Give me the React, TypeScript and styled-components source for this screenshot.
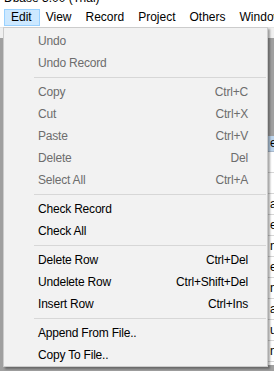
import React from "react";
import styled, { createGlobalStyle } from "styled-components";

const GlobalStyle = createGlobalStyle`
  html, body {
    margin: 0;
    padding: 0;
    overflow: hidden;
    background: #ffffff;
  }
`;

type MenuEntry =
  | { kind: "item"; label: string; shortcut?: string; disabled?: boolean }
  | { kind: "sep" };

const editMenu: MenuEntry[] = [
  { kind: "item", label: "Undo", disabled: true },
  { kind: "item", label: "Undo Record", disabled: true },
  { kind: "sep" },
  { kind: "item", label: "Copy", shortcut: "Ctrl+C", disabled: true },
  { kind: "item", label: "Cut", shortcut: "Ctrl+X", disabled: true },
  { kind: "item", label: "Paste", shortcut: "Ctrl+V", disabled: true },
  { kind: "item", label: "Delete", shortcut: "Del", disabled: true },
  { kind: "item", label: "Select All", shortcut: "Ctrl+A", disabled: true },
  { kind: "sep" },
  { kind: "item", label: "Check Record" },
  { kind: "item", label: "Check All" },
  { kind: "sep" },
  { kind: "item", label: "Delete  Row", shortcut: "Ctrl+Del" },
  { kind: "item", label: "Undelete Row", shortcut: "Ctrl+Shift+Del" },
  { kind: "item", label: "Insert Row", shortcut: "Ctrl+Ins" },
  { kind: "sep" },
  { kind: "item", label: "Append From File.." },
  { kind: "item", label: "Copy To File.." },
];

const topMenus = ["Edit", "View", "Record", "Project", "Others", "Window"];

const gridRows = ["", "", "adams", "evans", "nolan", "ellis", "nash", "allen", "upton", "noble"];

export default function App() {
  return (
    <>
      <GlobalStyle />
      <Screen>
        <TitleStrip>
          <TitleText>Dbase 3.00 (Trial)</TitleText>
        </TitleStrip>
        <MenuBar>
          {topMenus.map((m, i) => (
            <TopItem key={m} $open={i === 0}>
              {m}
            </TopItem>
          ))}
        </MenuBar>
        <Workspace>
          <ToolStrip />
          <MdiArea>
            <GridWindow>
              <GridHeader>
                <Cell $first>No</Cell>
                <Cell>ename</Cell>
              </GridHeader>
              {gridRows.map((r, i) => (
                <GridRow key={i}>
                  <Cell $first />
                  <Cell>{r}</Cell>
                </GridRow>
              ))}
            </GridWindow>
          </MdiArea>
        </Workspace>

        <Dropdown>
          {editMenu.map((e, i) =>
            e.kind === "sep" ? (
              <Separator key={i} />
            ) : (
              <MenuRow key={i} $disabled={e.disabled}>
                <Label>{e.label}</Label>
                {e.shortcut && <Shortcut>{e.shortcut}</Shortcut>}
              </MenuRow>
            )
          )}
        </Dropdown>
      </Screen>
    </>
  );
}

const Screen = styled.div`
  position: relative;
  width: 274px;
  height: 371px;
  overflow: hidden;
  display: flex;
  flex-direction: column;
  font-family: "Liberation Sans", Arial, sans-serif;
  font-size: 12px;
  color: #000;
  background: #fff;
`;

const TitleStrip = styled.div`
  height: 5px;
  overflow: hidden;
  display: flex;
  align-items: flex-end;
  padding-left: 4px;
`;

const TitleText = styled.span`
  display: block;
  height: 13px;
  line-height: 12px;
  white-space: nowrap;
  flex-shrink: 0;
`;

const MenuBar = styled.div`
  height: 22px;
  display: flex;
  align-items: flex-start;
  padding: 4px 0 0 4px;
  box-sizing: border-box;
  background: #fff;
`;

const TopItem = styled.div<{ $open?: boolean }>`
  height: 17px;
  box-sizing: border-box;
  padding: 0 7px 0 6px;
  line-height: 15px;
  white-space: nowrap;
  border: 1px solid ${(p) => (p.$open ? "#99d1ff" : "transparent")};
  background: ${(p) => (p.$open ? "#cce8ff" : "transparent")};
  margin-left: -1px;
  &:first-child {
    margin-left: 0;
  }
`;

const Workspace = styled.div`
  flex: 1;
  display: flex;
  flex-direction: column;
`;

const ToolStrip = styled.div`
  height: 10px;
  background: #f0f0f0;
  border-top: 1px solid #e3e3e3;
`;

const MdiArea = styled.div`
  position: relative;
  flex: 1;
  background: #a0a0a0;
`;

const GridWindow = styled.div`
  position: absolute;
  left: 127px;
  top: 98px;
  width: 200px;
  bottom: 6px;
  background: #fff;
  border-left: 2px solid #6f8fc0;
  overflow: hidden;
`;

const GridHeader = styled.div`
  display: flex;
  height: 15px;
  line-height: 15px;
  background: #bcd4ec;
  border-bottom: 1px solid #a9b9cc;
`;

const GridRow = styled.div`
  display: flex;
  height: 21px;
  line-height: 20px;
  box-sizing: border-box;
  border-bottom: 1px solid #d6d6d6;
`;

const Cell = styled.div<{ $first?: boolean }>`
  width: ${(p) => (p.$first ? "139px" : "auto")};
  flex: ${(p) => (p.$first ? "none" : "1")};
  padding-left: 2px;
  box-sizing: border-box;
  border-right: ${(p) => (p.$first ? "1px solid #d6d6d6" : "none")};
  white-space: nowrap;
  overflow: hidden;
`;

const Dropdown = styled.div`
  position: absolute;
  left: 3px;
  top: 27px;
  width: 265px;
  box-sizing: border-box;
  background: #f2f2f2;
  border: 1px solid #cccccc;
  box-shadow: 2px 2px 2px rgba(0, 0, 0, 0.35);
  padding: 2px 0 0 0;
  letter-spacing: -0.2px;
`;

const MenuRow = styled.div<{ $disabled?: boolean }>`
  display: flex;
  align-items: center;
  height: 22px;
  line-height: 22px;
  padding: 0 19px 0 34px;
  color: ${(p) => (p.$disabled ? "#6d6d6d" : "#000")};
  white-space: nowrap;
`;

const Label = styled.span`
  flex: 1;
`;

const Shortcut = styled.span`
  text-align: right;
`;

const Separator = styled.div`
  height: 7px;
  box-sizing: border-box;
  padding-top: 3px;
  margin-left: 30px;
  margin-right: 1px;
  &::after {
    content: "";
    display: block;
    height: 1px;
    background: #d7d7d7;
  }
`;
